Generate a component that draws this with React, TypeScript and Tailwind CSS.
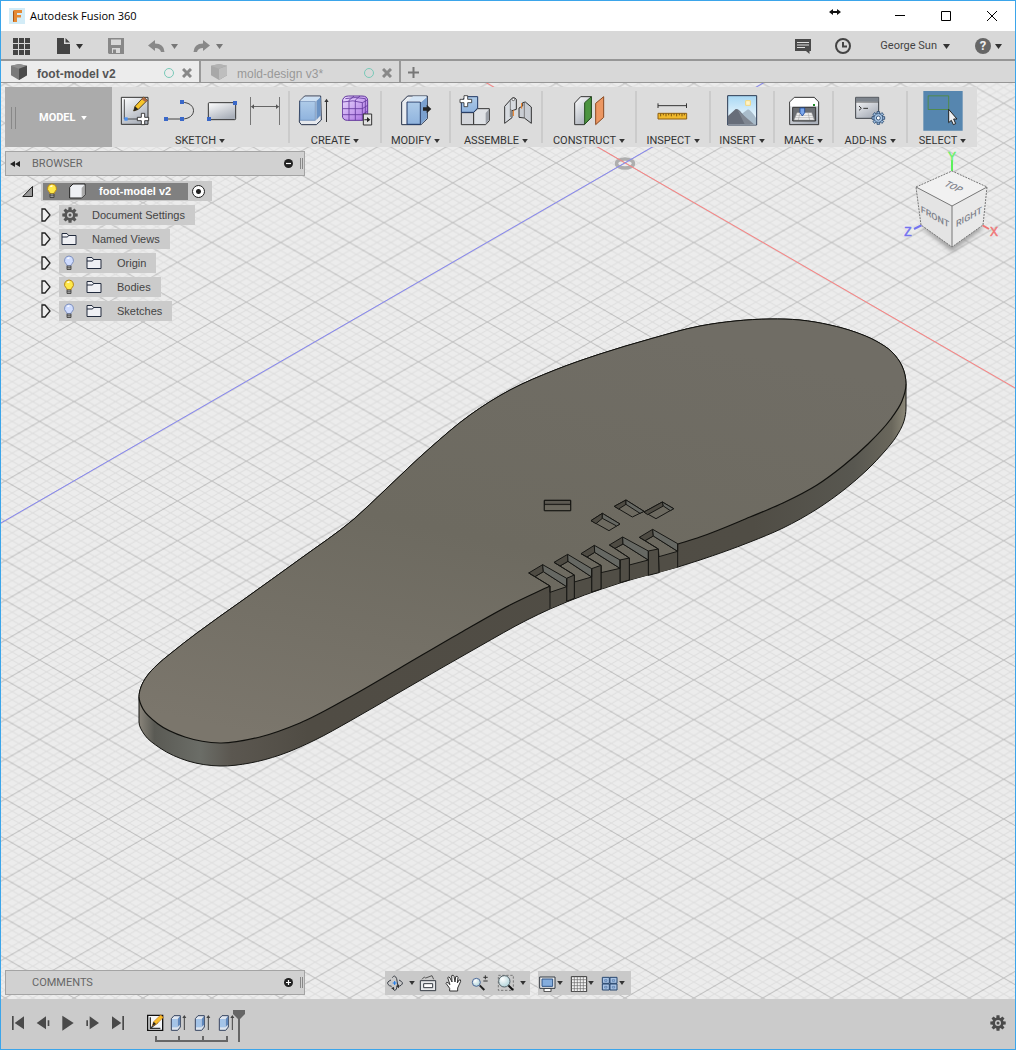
import React, { useState } from "react";
import type { ReactNode } from "react";

type Pt = [number, number];

/**
 * Smooth curve through a list of points, as path segments. Tangents are weighted by
 * segment length; the first and last can be given as unit vectors.
 */
function curve(pts: Pt[], start?: Pt, end?: Pt): string {
  const dist = (a: Pt, b: Pt) => Math.hypot(b[0] - a[0], b[1] - a[1]);
  const tangents = pts.map((p, i): Pt => {
    const prev = pts[i - 1];
    const next = pts[i + 1];
    if (!prev) return start ?? [(next[0] - p[0]) / dist(p, next), (next[1] - p[1]) / dist(p, next)];
    if (!next) return end ?? [(p[0] - prev[0]) / dist(prev, p), (p[1] - prev[1]) / dist(prev, p)];
    const a = dist(prev, p);
    const b = dist(p, next);
    const along = (k: 0 | 1) => (((p[k] - prev[k]) / a) * b + ((next[k] - p[k]) / b) * a) / (a + b);
    return [along(0), along(1)];
  });
  let d = "";
  for (let i = 0; i < pts.length - 1; i++) {
    const p = pts[i];
    const q = pts[i + 1];
    const h = dist(p, q) / 3;
    d += `C${p[0] + tangents[i][0] * h} ${p[1] + tangents[i][1] * h} ${q[0] - tangents[i + 1][0] * h} ${q[1] - tangents[i + 1][1] * h} ${q[0]} ${q[1]}`;
  }
  return d;
}

const up: Pt = [0, -1];
const down: Pt = [0, 1];

const upperEdge = curve([
  [139, 697], [141, 687], [147, 676], [157, 665], [170, 654], [197, 633], [243, 600], [300, 559], [354, 519],
  [385, 490], [430, 448], [470, 415], [510, 390], [555, 370], [600, 354], [650, 339], [700, 326],
  [735, 321], [770, 319], [800, 320], [830, 325], [855, 332], [876, 341], [892, 352], [902, 366], [906, 384],
], up, down);
const innerRight = curve([
  [906, 384], [902, 401], [890, 420], [868, 444], [843, 466], [817, 485], [783, 503],
  [750, 517], [700, 537], [678, 544],
], down);
const innerLeft = curve([
  [550, 586], [510, 605], [460, 633], [400, 668], [350, 697], [300, 723], [260, 737], [220, 743],
  [185, 737], [158, 724], [143, 709], [139, 697],
], undefined, up);
const bottomRight = curve([
  [906, 408], [904, 421], [896, 437], [885, 451], [867, 470], [845, 489], [817, 509],
  [783, 528], [750, 542], [700, 560], [678, 567],
], down);
const bottomLeft = curve([
  [678, 567], [620, 583], [550, 609], [527, 620], [480, 646], [400, 692],
  [350, 721], [315, 740], [280, 755], [250, 763], [220, 766], [188, 761], [160, 748], [144, 734], [139, 722],
], undefined, up);
const bodyPath = `M139 697${upperEdge}L906 408${bottomRight}${bottomLeft}Z`;
const topPath = `M139 697${upperEdge}${innerRight}L658 549 648 551 629 558 620 560 601 565 592 569 574 575 567 578 550 586${innerLeft}Z`;

/* Corners of each slot: l/b/r top rim, li/bi/ri floor, f/fb/bl front lip, br right foot, t/tb neighbouring tooth. */
const notches = [
  { l: "388,172", li: "405,182", b: "428,148", bi: "430,168", r: "503,191", ri: "503,214", f: "445,207", fb: "447,230", bl: "447,278", br: "503,262", t: "415,213", tb: "415,286" },
  { l: "298,195", li: "315,205", b: "338,171", bi: "339,192", r: "415,213", ri: "415,240", f: "358,234", fb: "358,255", bl: "358,300", br: "415,286", t: "330,240", tb: "330,308" },
  { l: "213,221", li: "231,231", b: "253,196", bi: "254,217", r: "330,240", ri: "330,265", f: "273,256", fb: "273,278", bl: "273,327", br: "330,308", t: "245,266", tb: "245,336" },
  { l: "132,247", li: "150,258", b: "173,223", bi: "174,244", r: "245,266", ri: "245,291", f: "193,285", fb: "193,306", bl: "193,355", br: "245,336", t: "170,295", tb: "170,364" },
  { l: "56,279", li: "75,290", b: "98,254", bi: "100,275", r: "170,295", ri: "170,320", f: "120,318", fb: "120,337", bl: "120,386", br: "170,364", t: "", tb: "" },
];

/** Minor lines of one grid cell: each family repeats at fifths of the cell width. */
const minorLines = [-4, -3, -2, -1, 1, 2, 3, 4]
  .map((k) => {
    const x = (k * 68.86) / 5;
    return `M${x} 0l68.86 39.76M${x} 39.76l68.86 -39.76`;
  })
  .join("");

function Scene() {
  return (
    <svg className="absolute inset-0 h-full w-full" aria-label="Model viewport" role="img">
      <defs>
        <pattern id="grid" width="68.86" height="39.76" patternUnits="userSpaceOnUse" x="625" y="163">
          <path d={minorLines} stroke="#000" strokeOpacity="0.06" strokeWidth="1" />
          <path d="M-1 -.58L69.86 40.34M-1 40.34L69.86 -.58" stroke="#000" strokeOpacity="0.2" strokeWidth="1" />
        </pattern>
        <linearGradient id="top" x1="0.2" y1="1" x2="0.6" y2="0">
          <stop offset="0" stopColor="#7b766c" />
          <stop offset="0.5" stopColor="#6d6a60" />
          <stop offset="1" stopColor="#706d65" />
        </linearGradient>
        <linearGradient id="side" gradientUnits="userSpaceOnUse" x1="139" y1="0" x2="907" y2="0">
          <stop offset="0" stopColor="#8a857b" />
          <stop offset="0.02" stopColor="#5a5a54" />
          <stop offset="0.08" stopColor="#6b6d67" />
          <stop offset="0.12" stopColor="#5b5750" />
          <stop offset="0.22" stopColor="#504c44" />
          <stop offset="0.8" stopColor="#504d45" />
          <stop offset="0.93" stopColor="#585750" />
          <stop offset="0.98" stopColor="#6a675c" />
          <stop offset="1" stopColor="#8f8b7b" />
        </linearGradient>
      </defs>
      <g transform="translate(-1 -83)">
        <rect width="120%" height="200%" fill="#ececec" />
        <rect width="120%" height="200%" fill="url(#grid)" />
        <ellipse cx="625" cy="163.500" rx="8.500" ry="4.500" fill="none" stroke="#aeaeae" strokeWidth="3.500" />
        <path d="M485 82L2425 1202" stroke="#ff8080" />
        <path d="M765 82L-375 740" stroke="#8585f5" />
        <path d={bodyPath} fill="url(#side)" stroke="#151512" />
        <path d={topPath} fill="url(#top)" />
        <path d={`M906 384${innerRight}M550 586${innerLeft}`} fill="none" stroke="#11110e" strokeWidth="1.200" />
        <path d={`M139 697${upperEdge}`} fill="none" stroke="#11110e" />
        <g transform="translate(510 480) scale(.33333)" stroke="#171714" strokeWidth="3" strokeLinejoin="round">
          {notches.map((n) => (
            <g key={n.l}>
              <polygon points={`${n.fb} ${n.ri} ${n.br} ${n.bl}`} fill="#514e46" stroke="none" />
              <polygon points={`${n.li} ${n.bi} ${n.ri} ${n.fb} ${n.f}`} fill="#6c695f" />
              <polygon points={`${n.l} ${n.b} ${n.bi} ${n.li}`} fill="#4e4b43" />
              <polygon points={`${n.b} ${n.r} ${n.ri} ${n.bi}`} fill="#666863" />
              <path d={`M${n.l}L${n.f}L${n.bl}M${n.r}L${n.br}`} fill="none" />
              {n.t && <polygon points={`${n.t} ${n.f} ${n.bl} ${n.tb}`} fill="#514e46" />}
            </g>
          ))}
          <path d="M103 61H182V92H103Z" fill="#5d5a52" />
          <path d="M103 73H182" />
          <path d="M103 76H182V92H103Z" fill="#6b685e" stroke="none" />
          <path d="M103 61H182V92H103Z" fill="none" />
          <path d="M243 122L277 100 330 132 297 152Z" fill="#6d6a60" />
          <path d="M243 122L277 100V115L258 131Z" fill="#4e4b43" />
          <path d="M277 100L330 132 320 138 277 115Z" fill="#666863" />
          <path d="M313 79L348 60 402 94 367 111Z" fill="#6d6a60" />
          <path d="M313 79L348 60V73L326 87Z" fill="#4e4b43" />
          <path d="M348 60L402 94 390 100 348 73Z" fill="#666863" />
          <path d="M402 96L457 66 491 86 438 116Z" fill="#6d6a60" />
          <path d="M402 96L457 66 460 78 413 104Z" fill="#4e4b43" />
          <path d="M457 66L491 86 481 92 460 78Z" fill="#666863" />
        </g>
      </g>
    </svg>
  );
}

function Art({ box, className, children }: { box: string; className: string; children: ReactNode }) {
  return (
    <svg viewBox={box} className={`block shrink-0 ${className}`} fill="none" aria-hidden="true">
      {children}
    </svg>
  );
}

function Caret({ small, className = "text-[#333]" }: { small?: boolean; className?: string }) {
  return (
    <Art box="0 0 7 5" className={`${small ? "h-1 w-1.5" : "h-[5px] w-[7px]"} ${className}`}>
      <path d="M0 0H7L3.500 5Z" fill="currentColor" />
    </Art>
  );
}

function Gear({ className }: { className: string }) {
  return (
    <Art box="-8 -8 16 16" className={className}>
      {[0, 45, 90, 135].map((a) => (
        <path key={a} d="M-1.500 -7.700H1.500L2 0 1.500 7.700H-1.500L-2 0Z" fill="currentColor" transform={`rotate(${a})`} />
      ))}
      <circle r="5.600" fill="currentColor" />
      <circle r="3" fill="#c9c9c9" />
      <circle r="1.500" fill="currentColor" />
    </Art>
  );
}

function Gradients() {
  return (
    <svg className="absolute h-0 w-0" aria-hidden="true">
      <defs>
        <linearGradient id="paper" x1="0" y1="0" x2="0.6" y2="1">
          <stop offset="0" stopColor="#fff" />
          <stop offset="1" stopColor="#aab0ba" />
        </linearGradient>
        <linearGradient id="blue" x1="0" y1="0" x2="0" y2="1">
          <stop offset="0" stopColor="#aecbe8" />
          <stop offset="1" stopColor="#8fb3de" />
        </linearGradient>
        <linearGradient id="purple" x1="0" y1="0" x2="1" y2="1">
          <stop offset="0" stopColor="#eadcff" />
          <stop offset="1" stopColor="#a86be0" />
        </linearGradient>
        <linearGradient id="sky" x1="0" y1="0" x2="0" y2="1">
          <stop offset="0" stopColor="#a8d8f4" />
          <stop offset="1" stopColor="#fff" />
        </linearGradient>
        <radialGradient id="lens" cx="0.35" cy="0.3" r="0.8">
          <stop offset="0" stopColor="#fff" />
          <stop offset="1" stopColor="#a9cfd6" />
        </radialGradient>
      </defs>
    </svg>
  );
}

const blueSq = "#3a68c8";

const SketchIcon = () => (
  <Art box="363 285 96 96" className="size-8">
    <path d="M367 292H447V373H367Z" fill="url(#paper)" stroke="#333" strokeWidth="3" />
    <path d="M376 298V357H430" stroke="#333" strokeWidth="2.500" />
    <path d="M404 333L408 319 434 291 445 301 418 328Z" fill="#f7c52a" stroke="#3b2b10" strokeWidth="2.500" />
    <path d="M434 291L445 301 440 307 428 298Z" fill="#b06a45" />
    <path d="M404 333L408 319 418 328Z" fill="#222" />
    <path d="M376 352H386V362H376Z" fill="#4c90f0" />
    <path d="M427 340H437V352H449V362H437V374H427V362H415V352H427Z" fill="#fff" stroke="#222" strokeWidth="2.500" />
  </Art>
);
const ArcIcon = () => (
  <Art box="489 285 96 96" className="size-8">
    <path d="M497 357H546C592 357 592 307 546 307" stroke="#444" strokeWidth="3" />
    <path d="M492 351H504V363H492ZM540 351H552V363H540ZM540 300H552V312H540Z" fill={blueSq} />
  </Art>
);
const RectIcon = () => (
  <Art box="618 285 96 96" className="size-8">
    <rect x="625" y="308" width="82" height="51" rx="3" fill="url(#paper)" stroke="#333" strokeWidth="3" />
    <path d="M621 351H633V363H621ZM699 303H711V315H699Z" fill={blueSq} />
  </Art>
);
const DimIcon = () => (
  <Art box="747 285 96 96" className="size-8">
    <path d="M751.500 291V375M838.500 291V375" stroke="#777" strokeWidth="3" />
    <path d="M754 319.500H836" stroke="#666" strokeWidth="3" />
    <path d="M753 320L762 313V327ZM837 320L828 313V327Z" fill="#555" />
  </Art>
);
const ExtrudeIcon = () => (
  <Art box="891 285 102 96" className="h-8 w-[34px]">
    <path d="M899 303L914 288H962L964 360 949 374H904L898 366Z" fill="#e6e9ee" stroke="#26324a" strokeWidth="3" />
    <path d="M900 304H946V361H900Z" fill="url(#blue)" stroke="#5f80ad" strokeWidth="2" />
    <path d="M900 302L914 290H961L948 303Z" fill="#cde0f3" />
    <path d="M949 303L962 291V346L949 360Z" fill="#6b93c4" />
    <path d="M979.500 303V366" stroke="#333" strokeWidth="3" />
    <path d="M973 306L979.500 296 986 306Z" fill="#333" />
  </Art>
);
const FormIcon = () => (
  <Art box="36 285 96 96" className="size-8">
    <path d="M37 306Q38 288 55 288H96Q113 288 113 302V341Q112 361 96 361H52Q37 361 37 345Z" fill="url(#purple)" stroke="#63389c" strokeWidth="3" strokeLinejoin="round" />
    <path d="M38 306Q70 298 97 308V361M97 308L113 300M38 326H97L113 316M38 344H97L113 333M57 301V361M76 300V361M57 301L72 288M76 300L90 288M46 296Q75 289 106 296V350" stroke="#63389c" strokeWidth="2.500" />
    <path d="M100 342H125V375H100Z" fill="#e2e2e2" stroke="#333" strokeWidth="3" />
    <path d="M103 358H111V351L121 359 111 367V361H103Z" fill="#222" />
  </Art>
);
const ModifyIcon = () => (
  <Art box="210 285 96 96" className="size-8">
    <path d="M215 306L233 288H292V356L273 374H215Z" fill="#e9ecf0" stroke="#26324a" strokeWidth="3" strokeLinejoin="round" />
    <path d="M231 306H271V373H231Z" fill="url(#blue)" stroke="#1f3764" strokeWidth="3" />
    <path d="M233 304L249 289H290L274 304Z" fill="#d3e4f5" />
    <path d="M273 307L291 291V355L273 372Z" fill="#7aa0cf" />
    <path d="M279 322H290V314L304 327 290 340V332H279Z" fill="#222" />
  </Art>
);
const AssembleIcon = () => (
  <Art box="384 285 96 96" className="size-8">
    <path d="M391 338H428V374H391Z" fill="#d3d5da" stroke="#333" strokeWidth="3" />
    <path d="M428 337L440 326H475V362L464 374H428Z" fill="#dfe2e6" stroke="#333" strokeWidth="3" />
    <path d="M464 339L474 328V360L464 372Z" fill="#9ba0a8" />
    <path d="M391 337V302L405 290H440V324L428 337Z" fill="url(#blue)" stroke="#1f3764" strokeWidth="3" />
    <path d="M399 287H410V298H422V308H410V320H399V308H387V298H399Z" fill="#fff" stroke="#333" strokeWidth="2.500" />
  </Art>
);
const JointIcon = () => (
  <Art box="516 285 96 96" className="size-8">
    <path d="M524 319L541 300Q550 287 559 298V328L546 332V353L524 370Z" fill="#d7dbe0" stroke="#333" strokeWidth="3" strokeLinejoin="round" />
    <path d="M541 302V351M546 332L541 328" stroke="#555" strokeWidth="2" />
    <circle cx="550" cy="298" r="4" fill="#fff" stroke="#333" strokeWidth="2" />
    <path d="M567 324L578 318V308L586 306 604 321V370L583 354 567 352Z" fill="#c9cdd3" stroke="#333" strokeWidth="3" strokeLinejoin="round" />
    <path d="M583 309V354" stroke="#555" strokeWidth="2" />
    <path d="M550 331V348M575 309V326" stroke="#f07b1a" strokeWidth="3" />
  </Art>
);
const ConstructIcon = () => (
  <Art box="729 285 96 96" className="size-8">
    <path d="M734 309L752 290H784V352L763 374H734Z" fill="url(#paper)" stroke="#333" strokeWidth="3" strokeLinejoin="round" />
    <path d="M764 308L784 290V352L764 373Z" fill="#4c9440" stroke="#234d1d" strokeWidth="3" />
    <path d="M797 310L821 290V352L797 374Z" fill="#ec9762" stroke="#8a4a22" strokeWidth="3" />
  </Art>
);
const InspectIcon = () => (
  <Art box="-9 285 96 96" className="size-8">
    <path d="M-6 310V324M79.500 310V324M-6 317H79" stroke="#333" strokeWidth="3" />
    <path d="M-6 340H80V357H-6Z" fill="#f1b92c" stroke="#8d5f12" strokeWidth="3" />
    <path d="M2 341V349M10 341V346M18 341V349M26 341V346M34 341V349M42 341V346M50 341V349M58 341V346M66 341V349M73 341V346" stroke="#69430a" strokeWidth="2.500" />
  </Art>
);
const InsertIcon = () => (
  <Art box="198 285 96 96" className="size-8">
    <path d="M203 287H290V375H203Z" fill="url(#sky)" stroke="#2a3a52" strokeWidth="3" />
    <path d="M240 345L264 328Q272 330 288 353V373H240Z" fill="#a9bccb" />
    <path d="M204 348L227 327Q235 325 245 339L270 373H204Z" fill="#676d79" />
    <path d="M232 328Q243 340 282 373H254Z" fill="#7f8691" />
    <path d="M257 302H271V316H257Z" fill="#fff3c8" stroke="#f4d77c" strokeWidth="3" />
  </Art>
);
const MakeIcon = () => (
  <Art box="384 285 96 96" className="size-8">
    <path d="M389 306L403 292H463L476 306V374H389Z" fill="url(#paper)" stroke="#333" strokeWidth="3" strokeLinejoin="round" />
    <path d="M391 306L404 294H461L474 306V319H391Z" fill="#fff" />
    <path d="M398 322H467V363H398Z" fill="#6b6e73" stroke="#333" strokeWidth="3" />
    <path d="M411 338H455L463 360H402Z" fill="#f1f1f1" stroke="#999" strokeWidth="1.500" />
    <path d="M408 346H458M405 353H461M420 338L415 360M444 338L449 360" stroke="#999" strokeWidth="1.500" />
    <path d="M420 324H434V338L427 348 420 338Z" fill="#7ba7ec" stroke="#1e4a9c" strokeWidth="2.500" />
    <path d="M459 312H465V318H459Z" fill="#1c8a26" />
  </Art>
);
const AddInsIcon = () => (
  <Art box="582 285 96 96" className="size-8">
    <path d="M587 292H656V355H587Z" fill="url(#paper)" stroke="#3d4248" strokeWidth="3" />
    <path d="M588 293H655V305H588Z" fill="#7d848c" />
    <path d="M588 306.500H655" stroke="#444" strokeWidth="2" />
    <path d="M597 318L604 325 597 331M610 325H624" stroke="#333" strokeWidth="3" />
    <g transform="translate(655 354)">
      {[0, 45, 90, 135].map((a) => (
        <path key={a} d="M-4 -19H4V19H-4Z" fill="#9cbbdc" stroke="#26466c" strokeWidth="2.500" transform={`rotate(${a})`} />
      ))}
      <circle r="13" fill="#a9c6e4" stroke="#26466c" strokeWidth="2" />
      <circle r="6" fill="#fff" stroke="#26466c" strokeWidth="2.500" />
    </g>
  </Art>
);
const SelectIcon = () => (
  <Art box="786 273 120 120" className="size-10">
    <path d="M787 273H905V392H787Z" fill="#5686af" />
    <path d="M801.500 287.500H863V328.500H801.500Z" stroke="#4f8a3a" strokeWidth="2.500" />
    <path d="M863 328V368L871 361 877 374 884 371 878 357H888Z" fill="#eef0f2" stroke="#222" strokeWidth="3" strokeLinejoin="round" />
  </Art>
);

function ToolGroup({ label, width, last, children }: { label: string; width: string; last?: boolean; children: ReactNode }) {
  return (
    <div className={`flex ${width}`}>
      <div className="flex flex-1 flex-col items-center pt-1">
        <button type="button" className={`flex h-10 justify-center gap-[11px] ${last ? "" : "pt-1"}`} aria-label={`${label} tools`}>
          {children}
        </button>
        <button type="button" className="mt-1 flex items-center gap-[3px] leading-3 whitespace-nowrap text-[#333]">
          {label}
          <Caret small />
        </button>
      </div>
      {!last && <span className="my-1 w-0.5 bg-[#cbcbcb]" />}
    </div>
  );
}

function Toolbar() {
  return (
    <div className="flex h-[60px] w-fit bg-[#dcdcdc]">
      <button type="button" className="flex w-[107px] items-center bg-[#ababab] pt-0.5 pl-[6px] font-bold text-white">
        <span className="mr-[23px] h-[22px] w-[5px] border-x border-[#888]" />
        MODEL
        <Caret small className="ml-[5px] text-white" />
      </button>
      <div className="flex">
        <ToolGroup label="SKETCH" width="w-[178px]"><SketchIcon /><ArcIcon /><RectIcon /><DimIcon /></ToolGroup>
        <ToolGroup label="CREATE" width="w-[92px]"><ExtrudeIcon /><FormIcon /></ToolGroup>
        <ToolGroup label="MODIFY" width="w-[69px]"><ModifyIcon /></ToolGroup>
        <ToolGroup label="ASSEMBLE" width="w-[92px]"><AssembleIcon /><JointIcon /></ToolGroup>
        <ToolGroup label="CONSTRUCT" width="w-[94px]"><ConstructIcon /></ToolGroup>
        <ToolGroup label="INSPECT" width="w-[74px]"><InspectIcon /></ToolGroup>
        <ToolGroup label="INSERT" width="w-[64px]"><InsertIcon /></ToolGroup>
        <ToolGroup label="MAKE" width="w-[59px]"><MakeIcon /></ToolGroup>
        <ToolGroup label="ADD-INS" width="w-[74px]"><AddInsIcon /></ToolGroup>
        <ToolGroup label="SELECT" width="w-[69px]" last><SelectIcon /></ToolGroup>
      </div>
    </div>
  );
}

const Bulb = ({ on }: { on?: boolean }) => (
  <Art box="0 0 12 16" className="h-4 w-3">
    <path d="M6 1A4.500 4.500 0 0 1 8.900 8.900Q8 9.500 8 11H4Q4 9.500 3.100 8.900A4.500 4.500 0 0 1 6 1Z" fill={on ? "#ffe94a" : "#cfdcff"} stroke={on ? "#b58618" : "#7e90bd"} />
    <path d="M4.500 3.800Q5 2.800 6.500 2.800" stroke="#fff" strokeWidth="1.300" />
    <path d="M4 11H8V14.500H4Z" fill="#bbb" stroke="#333" strokeWidth="0.800" />
    <path d="M4 12.800H8" stroke="#333" strokeWidth="0.800" />
  </Art>
);
const Folder = () => (
  <Art box="0 0 16 14" className="h-3.5 w-4">
    <path d="M1 12.500V1.500H6L7.500 3.500H15V12.500Z" fill="#eff0f4" stroke="#222b3d" />
    <path d="M1 5H6.500L7.500 3.500" stroke="#222b3d" />
  </Art>
);
const Expander = () => (
  <Art box="0 0 10 14" className="h-3.5 w-2.5">
    <path d="M1 1L4 1 9 7 4 13H1Z" fill="#eee" stroke="#222" strokeWidth="1.300" />
  </Art>
);

function TreeItem({ label, kind, on }: { label: string; kind: "gear" | "folder" | "body"; on?: boolean }) {
  return (
    <li className="flex h-5 items-center">
      <button type="button" aria-label={`Expand ${label}`} className="mr-2"><Expander /></button>
      <div className="flex h-5 items-center bg-[#cbcbcb] pr-[10px] pl-[2px]">
        {kind === "gear" && <Gear className="ml-px size-4 text-[#555]" />}
        {kind === "folder" && <Folder />}
        {kind === "body" && <button type="button" aria-label={`Toggle ${label}`} className="mr-[11px] ml-[2px]"><Bulb on={on} /></button>}
        {kind === "body" && <Folder />}
        <span className={kind === "gear" ? "ml-[14px]" : "ml-[15px]"}>{label}</span>
      </div>
    </li>
  );
}

function PanelHeader({ label, open }: { label: string; open?: boolean }) {
  return (
    <div className="flex h-[25px] w-[300px] items-center border border-[#a4a4a4] bg-[#d1d1d1] text-[#666]">
      <div className="w-[26px] pl-1">
        {open && (
          <Art box="0 0 10 6" className="h-1.5 w-2.5">
            <path d="M5 0V6L0 3ZM10 0V6L5 3Z" fill="#222" />
          </Art>
        )}
      </div>
      <h2 className="flex-1 pt-0.5">{label}</h2>
      <button type="button" aria-label={open ? "Collapse browser" : "Expand comments"}>
        <Art box="0 0 9 9" className="size-[9px]">
          <circle cx="4.500" cy="4.500" r="4.500" fill="#222" />
          <path d={open ? "M2 4.500H7" : "M2 4.500H7M4.500 2V7"} stroke="#fff" strokeWidth="1.200" />
        </Art>
      </button>
      <span className="mr-px ml-[7px] h-[11px] w-[3px] border-x border-[#888]" />
    </div>
  );
}

function BrowserTree() {
  return (
    <nav className="mt-[5px] font-['Liberation_Sans',sans-serif] text-[#444]" aria-label="Browser">
      <div className="flex h-5 items-center pl-[17px]">
        <button type="button" aria-label="Collapse foot-model v2" className="mr-2">
          <Art box="0 0 11 11" className="size-[11px]"><path d="M10.500 .5V10.500H.8Z" fill="#999" stroke="#222" /></Art>
        </button>
        <div className="flex h-5 items-center bg-[#c9c9c9] pr-[7px] pl-[2px]">
          <div className="flex h-[17px] w-[145px] items-center bg-[#808080] pl-[3px] font-bold text-white">
            <Bulb on />
            <Art box="206 129 51 48" className="mr-[13px] ml-[11px] h-4 w-[17px]">
              <path d="M208 142L218 132H254V164L244 174H208Z" fill="#eef0f4" stroke="#222" strokeWidth="3" strokeLinejoin="round" />
              <path d="M244 144L253 134V163L244 173Z" fill="#aaa" />
            </Art>
            foot-model v2
          </div>
          <label className="ml-1 flex">
            <input type="radio" defaultChecked aria-label="Activate component" className="size-[13px] appearance-none rounded-full border border-[#222] bg-[radial-gradient(circle,#222_0_2px,#fff_3px)]" />
          </label>
        </div>
      </div>
      <ul className="mt-1 flex flex-col gap-1 pl-9">
        <TreeItem label="Document Settings" kind="gear" />
        <TreeItem label="Named Views" kind="folder" />
        <TreeItem label="Origin" kind="body" />
        <TreeItem label="Bodies" kind="body" on />
        <TreeItem label="Sketches" kind="body" />
      </ul>
    </nav>
  );
}

function ViewCube() {
  return (
    <svg viewBox="900 150 100 105" className="absolute top-[67px] right-[15px] h-[105px] w-[100px]" role="img" aria-label="View cube">
      <defs>
        <filter id="soft"><feGaussianBlur stdDeviation="2" /></filter>
      </defs>
      <path d="M922 228L952 252 984 228 952 218Z" fill="#888" opacity="0.7" filter="url(#soft)" />
      <path d="M952 160V171" stroke="#5cf05c" strokeWidth="2" />
      <path d="M922 225L914 229" stroke="#7373f0" strokeWidth="2" />
      <path d="M982 225L989 229" stroke="#f07373" strokeWidth="2" />
      <path d="M916 187L952 171 987 187 952 206Z" fill="#f1f1f1" />
      <path d="M916 187L952 206V247L921 225Z" fill="#e4e4e4" />
      <path d="M987 187L952 206V247L983 225Z" fill="#e9e9e9" />
      <path d="M916 187L952 171 987 187 983 225 952 247 921 225Z" fill="none" stroke="#777" strokeDasharray="2 1" />
      <path d="M916 187L952 206 987 187M952 206V247" fill="none" stroke="#777" />
      <g fontFamily="Roboto, sans-serif" fontSize="9" fontWeight="500" textAnchor="middle" fill="#80838c">
        <text transform="translate(951 189) rotate(25) skewX(-25)">TOP</text>
        <text transform="translate(935 220) skewY(29)">FRONT</text>
        <text transform="translate(969 220) skewY(-29)">RIGHT</text>
      </g>
      <g fontFamily="Liberation Sans, sans-serif" fontSize="12" textAnchor="middle" strokeWidth="0.500">
        <text x="952" y="161" fill="#6cf06c" stroke="#6cf06c">Y</text>
        <text x="908" y="236" fill="#7373f0" stroke="#7373f0">Z</text>
        <text x="994" y="236" fill="#f07878" stroke="#f07878">X</text>
      </g>
    </svg>
  );
}

function NavBar() {
  return (
    <div className="flex gap-2">
      <div className="flex h-6 w-[145px] items-center bg-[#c9c9c9] pl-[2px]">
        <button type="button" aria-label="Orbit" className="flex items-center gap-[5px]">
          <Art box="54 42 51 54" className="h-[18px] w-[17px]">
            <path d="M70 53Q77 42 83 56Q89 72 82 88Q77 96 71 86" stroke="#3a3f47" strokeWidth="3" />
            <path d="M66 60Q52 66 57 73Q60 78 68 79M90 60Q107 68 96 76Q92 79 86 79" stroke="#3a3f47" strokeWidth="3" />
            <path d="M90 73V85L82 79ZM66 84L75 81 76 91Z" fill="#333" />
            <path d="M77 63V75M71 69H83" stroke="#1d7bea" strokeWidth="3" />
          </Art>
          <Caret small />
        </button>
        <button type="button" aria-label="Look at" className="ml-1">
          <Art box="150 45 54 51" className="h-[17px] w-[18px]">
            <path d="M154 62H200V92H154Z" fill="#e6e8ea" stroke="#333a42" strokeWidth="3" />
            <path d="M164 71H191V83H164Z" fill="#fff" stroke="#333a42" strokeWidth="3" />
            <path d="M159 58L166 51 170 54 189 47 194 58" stroke="#555" strokeWidth="3" />
          </Art>
        </button>
        <button type="button" aria-label="Pan" className="ml-2">
          <Art box="231 42 51 54" className="h-[18px] w-[17px]">
            <path d="M245 93V85L234 70Q235 64 241 69L246 74 239 53Q243 48 246 54L252 66 251 47Q256 43 258 49L261 66 263 50Q268 46 270 52L268 69 273 60Q279 57 278 64L269 84V93Z" fill="#fff" stroke="#333" strokeWidth="3" strokeLinejoin="round" />
          </Art>
        </button>
        <button type="button" aria-label="Zoom" className="ml-[9px]">
          <Art box="306 42 54 54" className="size-[18px]">
            <path d="M332 76L346 90" stroke="#222" strokeWidth="6" />
            <circle cx="322" cy="67" r="12" fill="url(#lens)" stroke="#4b6796" strokeWidth="3" />
            <path d="M349 46V58M343 52H356M343 63H356" stroke="#333" strokeWidth="3" />
          </Art>
        </button>
        <button type="button" aria-label="Fit" className="ml-2 flex items-center gap-[5px]">
          <Art box="384 42 54 54" className="size-[18px]">
            <path d="M388 46H433V91H388Z" stroke="#777" strokeWidth="3" strokeDasharray="7 5" />
            <path d="M416 74L432 90" stroke="#111" strokeWidth="6" />
            <circle cx="406" cy="64" r="17" fill="url(#lens)" stroke="#56646a" strokeWidth="3" />
          </Art>
          <Caret small />
        </button>
      </div>
      <div className="flex h-6 w-[93px] items-center gap-[7px] bg-[#c9c9c9] pl-px">
        <button type="button" aria-label="Display settings" className="flex items-center">
          <Art box="509 42 54 51" className="h-[17px] w-[18px]">
            <path d="M524 82H545V92H524Z" fill="#fff" stroke="#444" strokeWidth="3" />
            <path d="M511 48H557V82H511Z" fill="#eee" stroke="#333a42" strokeWidth="3" />
            <path d="M518 54H550V76H518Z" fill="#84addd" stroke="#2f5587" strokeWidth="3" />
          </Art>
          <Caret small />
        </button>
        <button type="button" aria-label="Grid settings" className="flex items-center">
          <Art box="600 42 54 51" className="h-[17px] w-[18px]">
            <path d="M604 47H650V92H604Z" fill="#f3f3f3" stroke="#333" strokeWidth="3" />
            <path d="M613 47V92M622 47V92M631 47V92M640 47V92M604 56H650M604 65H650M604 74H650M604 83H650" stroke="#666" strokeWidth="2" />
          </Art>
          <Caret small />
        </button>
        <button type="button" aria-label="Viewports" className="flex items-center">
          <Art box="693 42 54 51" className="h-[17px] w-[18px]">
            <path d="M697 49H718V67H697ZM720 49H741V67H720ZM697 69H718V87H697ZM720 69H741V87H720Z" fill="#a9c3e4" stroke="#27466f" strokeWidth="3" />
            <path d="M704 56H711V61H704ZM727 56H734V61H727ZM704 76H711V81H704ZM727 76H734V81H727Z" stroke="#4d72a5" strokeWidth="2" />
          </Art>
          <Caret small />
        </button>
      </div>
    </div>
  );
}

const playback = [
  { name: "Go to start", d: "M36 168H41V210H36ZM72 169V208L44 189Z", box: "33 162 42 54" },
  { name: "Step back", d: "M108 189L136 169V208ZM141 181H146V198H141Z", box: "106 162 42 54" },
  { name: "Play", d: "M187 167L221 189 187 212Z", box: "183 162 42 54" },
  { name: "Step forward", d: "M258 181H263V198H258ZM268 169L296 189 268 208Z", box: "257 162 42 54" },
  { name: "Go to end", d: "M336 169L364 189 336 208ZM367 168H372V210H367Z", box: "333 162 42 54" },
];

function Timeline() {
  return (
    <footer className="flex h-[50px] items-start bg-[#cbcbcb] pt-[11px] pl-1">
      {playback.map((p) => (
        <button key={p.name} type="button" aria-label={p.name} className="flex h-[26px] w-[25px] items-center justify-center">
          <Art box={p.box} className="h-[18px] w-[14px]"><path d={p.d} fill="#4a4a4a" /></Art>
        </button>
      ))}
      <div className="ml-[13px]">
        <div className="flex">
          <button type="button" aria-label="Sketch feature" className="flex h-[26px] w-6 items-center justify-center">
            <Art box="438 165 54 54" className="size-[18px]">
              <path d="M443 169H488V214H443Z" fill="#f4f6f8" stroke="#111" strokeWidth="4" />
              <path d="M451 175V208H481M452 207L474 190" stroke="#333" strokeWidth="4" />
              <path d="M457 200L461 188 482 168 490 175 469 196Z" fill="#f9bd2a" stroke="#c0761b" strokeWidth="2" />
              <path d="M457 200L461 188 468 195Z" fill="#222" />
            </Art>
          </button>
          {[1, 2, 3].map((n) => (
            <button key={n} type="button" aria-label={`Extrude ${n}`} className="flex h-[26px] w-6 items-center justify-center">
              <Art box="510 165 54 54" className="size-[18px]">
                <path d="M514 179L522 170H541V204L533 214H514Z" fill="#dfe6f0" stroke="#34435f" strokeWidth="3" strokeLinejoin="round" />
                <path d="M516 180H532V205H516Z" fill="#a4c4e8" />
                <path d="M533 180L540 172V196L533 205Z" fill="#5f87bb" />
                <path d="M553 172V213" stroke="#444" strokeWidth="3" />
                <path d="M547 177L553 168 559 177Z" fill="#444" />
              </Art>
            </button>
          ))}
        </div>
        <Art box="0 0 96 6" className="h-1.5 w-24">
          <path d="M13 0V5H84V0M36 0V5M60 0V5" stroke="#666" strokeWidth="2" />
        </Art>
      </div>
      <button type="button" aria-label="Timeline marker" className="-ml-1.5">
        <Art box="0 0 12 32" className="h-8 w-3">
          <path d="M0 0H12V4L7 9V32H5V9L0 4Z" fill="#666" />
        </Art>
      </button>
      <button type="button" aria-label="Timeline settings" className="mr-[9px] ml-auto flex h-[26px] items-center">
        <Gear className="size-4 text-[#4a4a4a]" />
      </button>
    </footer>
  );
}

function DocTab({ label, active, onSelect }: { label: string; active: boolean; onSelect: () => void }) {
  return (
    <div className={`flex h-full w-[200px] items-center border-r-2 border-[#999] pt-0.5 pl-[10px] ${active ? "bg-[#ececec] font-bold text-[#555]" : "text-[#999]"}`}>
      <button type="button" onClick={onSelect} className="flex items-center gap-[10px] font-['Liberation_Sans',sans-serif] text-xs">
        <Art box="33 192 48 48" className={active ? "mb-0.5 size-4" : "mb-0.5 size-4 opacity-50"}>
          <path d="M33 197L57 192 81 197V226L57 240 33 226Z" fill="#7a7a7a" />
          <path d="M33 197L57 192 81 197 57 206Z" fill="#8f8f8f" />
          <path d="M57 206L81 197V226L57 240Z" fill="#4c4c4c" />
          <path d="M57 206L81 197V226L57 240Z" fill="#ccc" opacity={active ? 0 : 0.7} />
        </Art>
        <span className="pt-0.5">{label}</span>
      </button>
      <span className="ml-auto size-[10px] rounded-full border border-[#79c9b8]" />
      <button type="button" aria-label={`Close ${label}`} className="mr-[7px] ml-2">
        <Art box="0 0 10 10" className="size-[10px]"><path d="M1 1L9 9M9 1L1 9" stroke="#888" strokeWidth="3" /></Art>
      </button>
    </div>
  );
}

export default function App() {
  const [tab, setTab] = useState(0);
  return (
    <div className="flex min-h-screen flex-col border border-[#3ba5ea] bg-white font-['Roboto',sans-serif] text-[11px] select-none">
      <Gradients />
      <header className="flex h-[30px] items-center pl-2">
        <Art box="0 0 16 16" className="mr-[5px] size-4">
          <path d="M0 0H16V16H0Z" fill="#d3ecf7" />
          <path d="M5 2H13V5H8V7H12V9.500H8V14H4V4Z" fill="#e58a35" />
          <path d="M4 4L5 2V13L4 14Z" fill="#a85414" />
        </Art>
        <h1 className="flex-1 font-['Open_Sans',sans-serif] text-[11px] text-black">Autodesk Fusion 360</h1>
        <Art box="0 0 12 6" className="mr-9 mb-2 h-1.5 w-3">
          <path d="M0 3L4 0V2H8V0L12 3 8 6V4H4V6Z" fill="#111" />
        </Art>
        <button type="button" aria-label="Minimize" className="flex h-full w-[46px] items-center justify-center">
          <Art box="0 0 10 10" className="size-[10px]"><path d="M0 4.500H10" stroke="#000" /></Art>
        </button>
        <button type="button" aria-label="Maximize" className="flex h-full w-[46px] items-center justify-center">
          <Art box="0 0 10 10" className="size-[10px]"><path d="M.5 .5H9.500V9.500H.5Z" stroke="#000" /></Art>
        </button>
        <button type="button" aria-label="Close" className="flex h-full w-[46px] items-center justify-center">
          <Art box="0 0 10 10" className="size-[10px]"><path d="M0 0L10 10M10 0L0 10" stroke="#000" /></Art>
        </button>
      </header>

      <div className="flex h-[30px] items-center border-b-2 border-[#969696] bg-[#d8d8d8] pt-0.5 pr-[13px] pl-3 text-[#444]">
        <button type="button" aria-label="Data panel">
          <Art box="0 0 17 17" className="size-[17px]">
            <path d="M0 0H5V5H0ZM6 0H11V5H6ZM12 0H17V5H12ZM0 6H5V11H0ZM6 6H11V11H6ZM12 6H17V11H12ZM0 12H5V17H0ZM6 12H11V17H6ZM12 12H17V17H12Z" fill="#444" />
          </Art>
        </button>
        <button type="button" aria-label="File" className="ml-[27px] flex items-center gap-1.5">
          <Art box="0 0 13 16" className="h-4 w-[13px]"><path d="M0 0H7V6H13V16H0ZM8.500 0L13 4.500H8.500Z" fill="#444" /></Art>
          <Caret />
        </button>
        <button type="button" aria-label="Save" className="ml-[25px]">
          <Art box="0 0 16 16" className="size-4">
            <path d="M0 0H16V16H1L0 15ZM3 1.500V7H13V1.500ZM4 10V15H12V10Z" fill="#888" fillRule="evenodd" />
            <path d="M5 11.500H8V15H5Z" fill="#888" />
          </Art>
        </button>
        <button type="button" aria-label="Undo" className="ml-6 flex items-center gap-1.5">
          <Art box="0 0 17 12" className="h-3 w-[17px]"><path d="M0 5.500L7 0V3.500Q16 3.500 16.500 12H13Q12 8 7 8V11Z" fill="#888" /></Art>
          <Caret className="text-[#777]" />
        </button>
        <button type="button" aria-label="Redo" className="ml-[15px] flex items-center gap-1.5">
          <Art box="0 0 17 12" className="h-3 w-[17px]"><path d="M17 5.500L10 0V3.500Q1 3.500 .5 12H4Q5 8 10 8V11Z" fill="#888" /></Art>
          <Caret className="text-[#777]" />
        </button>
        <button type="button" aria-label="Comments" className="ml-auto">
          <Art box="0 0 16 15" className="h-[15px] w-4">
            <path d="M0 0H16V12H14.500V15L11 12H0Z" fill="#4a4a4a" />
            <path d="M2 3.500H14M2 6H14M2 8.500H10" stroke="#ddd" />
          </Art>
        </button>
        <button type="button" aria-label="Job status" className="ml-6">
          <Art box="0 0 16 16" className="size-4">
            <circle cx="8" cy="8" r="7" stroke="#444" strokeWidth="2" />
            <path d="M8 4V8.500H12" stroke="#444" strokeWidth="2" />
          </Art>
        </button>
        <button type="button" className="ml-[29px] flex items-center gap-1.5">
          George Sun
          <Caret />
        </button>
        <button type="button" aria-label="Help" className="ml-[25px] flex items-center gap-1">
          <span className="flex size-4 items-center justify-center rounded-full bg-[#666] text-[13px] leading-4 font-bold text-[#eee]">?</span>
          <Caret />
        </button>
      </div>

      <div className="flex h-[22px] items-center border-b border-[#969696] bg-[#d8d8d8]">
        <DocTab label="foot-model v2" active={tab === 0} onSelect={() => setTab(0)} />
        <DocTab label="mold-design v3*" active={tab === 1} onSelect={() => setTab(1)} />
        <button type="button" aria-label="New tab" className="ml-[7px] pt-0.5">
          <Art box="0 0 11 11" className="size-[11px]"><path d="M5.500 0V11M0 5.500H11" stroke="#777" strokeWidth="2" /></Art>
        </button>
      </div>

      <main className="relative flex flex-1 flex-col overflow-hidden bg-[#ececec]">
        <Scene />
        <ViewCube />
        <div className="relative flex flex-1 flex-col items-start pt-1 pb-1 pl-1">
          <Toolbar />
          <div className="mt-1"><PanelHeader label="BROWSER" open /></div>
          <BrowserTree />
          <div className="mt-auto flex w-full items-end pr-1">
            <PanelHeader label="COMMENTS" />
            <div className="flex flex-1 justify-center"><NavBar /></div>
            <div className="w-[300px]" />
          </div>
        </div>
      </main>

      <Timeline />
    </div>
  );
}
